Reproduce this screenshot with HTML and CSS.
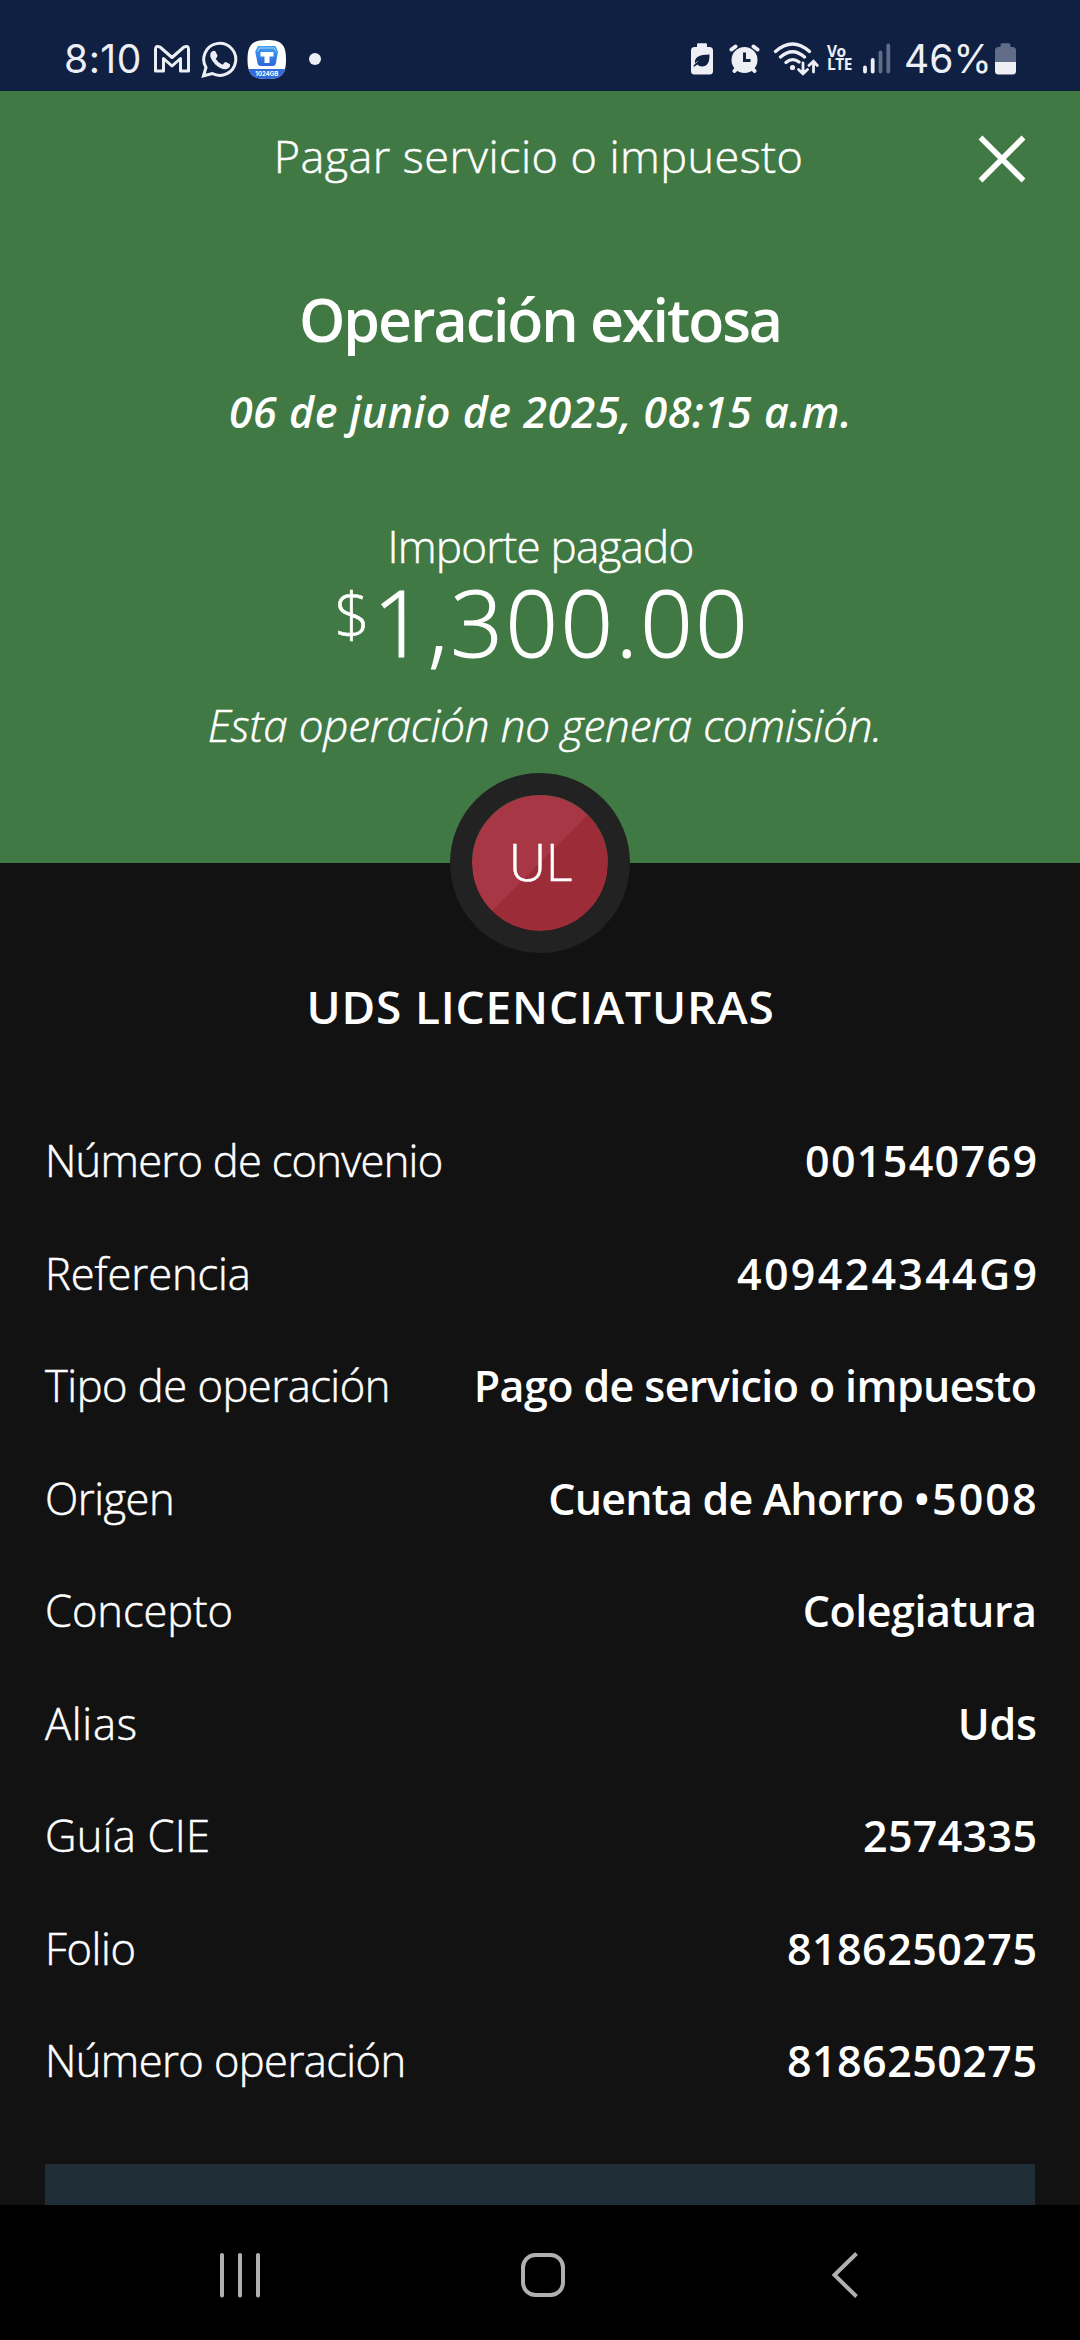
FILE: index.html
```html
<!DOCTYPE html>
<html lang="es">
<head>
<meta charset="utf-8">
<title>Pagar servicio o impuesto</title>
<link rel="stylesheet" href="styles.css">
</head>
<body>
<header class="status">
  <div class="status-side">
    <span class="clock">8:10</span>
    <svg class="ic gmail" width="38" height="40" viewBox="153 40 38 40"><path d="M155.500 49.500Q155.500 45 160 47L172 57.500L184 47Q188.500 45 188.500 49.500V71H180.500V58.500L172 66L163.500 58.500V71H155.500Z" fill="none" stroke="#edeff5" stroke-width="3" stroke-linejoin="round"/></svg>
    <svg class="ic whatsapp" width="38" height="40" viewBox="200 40 38 40"><path d="M203.500 75.800L206 67.500A16 16 0 1 1 212.300 73.500Z" fill="none" stroke="#edeff5" stroke-width="3" stroke-linejoin="miter"/><path d="M212.300 51.200Q214.200 50.200 215.500 51.500L217.500 55.500Q217.700 56.700 215.700 58.800Q218 63 222.500 64.800L224.500 62.500Q225.300 61.700 226.500 62.200L230 64.200Q230.700 67.700 226.800 69Q222 70.400 215.300 64.500Q209 57.800 210.500 53.300Q211 52 212.300 51.200Z" fill="#edeff5"/></svg>
    <svg class="ic app" width="40" height="40" viewBox="247 40 40 40">
      <defs><clipPath id="appShape"><path d="M267 40C281 40 286 44 286 59.500S281 79 267 79S247.500 75 247.500 59.500S253 40 267 40Z"/></clipPath><linearGradient id="box" x1="0" y1="0" x2="0" y2="1"><stop offset="0" stop-color="#3fa0ef"/><stop offset="1" stop-color="#2d66dd"/></linearGradient></defs>
      <g clip-path="url(#appShape)"><path fill="#fff" d="M247 40h40v40h-40z"/><path fill="#316bdc" d="M247 69h40v11h-40z"/></g>
      <path d="M258 46H275.500L278 51.500L276 63Q275.500 66 272.500 66H261Q258 66 257.500 63L255.200 51.500Z" fill="url(#box)"/>
      <path d="M257.500 51.500L259.300 48H274.200L276 51.500" fill="none" stroke="#d5ecff" stroke-width="0.700"/>
      <path d="M260.500 52H273.500V56.500H269.500V63H264.500V56.500H260.500Z" fill="#fff"/>
      <text class="app-size" x="266.800" y="76" text-anchor="middle">1024GB</text>
    </svg>
    <span class="dot"></span>
  </div>
  <div class="status-side">
    <svg class="ic" width="22" height="40" viewBox="691 40 22 40"><path d="M697 47V44.500Q697 43.300 698.300 43.300H705.700Q707 43.300 707 44.500V47H709.500Q713 47 713 50.500V71Q713 74.500 709.500 74.500H694.500Q691 74.500 691 71V50.500Q691 47 694.500 47Z" fill="#edeff5"/><path d="M709.500 54.500Q709.800 66.500 702 66.500Q698.500 66.300 697.500 64.500L693.700 67V65.300L699 60.500Q696.500 61.500 695 63.500Q693.500 54.500 709.500 54.500Z" fill="#0f2043"/></svg>
    <svg class="ic alarm" width="32" height="40" viewBox="729 40 32 40"><g fill="none" stroke="#edeff5" stroke-width="4" stroke-linecap="round"><path d="M731.500 49.500L735.500 46.500M757.500 49.500L753.500 46.500M734.500 71L738 67M754.500 71L751 67"/></g><circle cx="744.500" cy="60" r="13" fill="#edeff5"/><path d="M744.500 52.500V60.500H750.500" fill="none" stroke="#0f2043" stroke-width="3"/></svg>
    <svg class="ic wifi" width="46" height="40" viewBox="773 40 46 40"><g fill="none" stroke="#edeff5" stroke-width="3.300" stroke-linecap="round"><path d="M775.500 51.500Q792.500 36.500 809.500 51.500M780.500 57Q792.500 46.500 804.500 57M786 62.500Q792.500 57 799 62"/><path d="M803 63V73M798.500 69.500L803 73.800L807.500 69.500M813.500 72V62M809 65.500L813.500 61.200L817.300 65.500" stroke-width="2.800"/></g><circle cx="792.500" cy="67.500" r="2.600" fill="#edeff5"/></svg>
    <span class="volte"><span>Vo</span><span>LTE</span></span>
    <svg class="ic signal" width="28" height="40" viewBox="863 40 28 40"><g stroke-width="3.800" stroke-linecap="round"><path d="M865 67.500V71.500M872.700 60V71.500" stroke="#edeff5"/><path d="M880.500 52.500V71.500M888.300 45.500V71.500" stroke="#616c88"/></g></svg>
    <span class="percent">46%</span>
    <svg class="ic battery" width="21" height="40" viewBox="995 40 21 40"><path d="M1000.500 47V45Q1000.500 43.300 1002 43.300H1009Q1010.500 43.300 1010.500 45V47H1012.500Q1016 47 1016 50.500V63H995V50.500Q995 47 998.500 47Z" fill="#616c88"/><path d="M995 62H1016V71Q1016 74.500 1012.500 74.500H998.500Q995 74.500 995 71Z" fill="#edeff5"/></svg>
  </div>
</header>

<section class="hero">
  <div class="title-bar">
    <h1 class="title">Pagar servicio o impuesto</h1>
    <svg class="close" width="48" height="48" viewBox="0 0 48 48"><path d="M2.500 2.500L45.500 45.500M45.500 2.500L2.500 45.500" stroke="#fff" stroke-width="5.500" fill="none"/></svg>
  </div>
  <h2 class="result">Operación exitosa</h2>
  <p class="date">06 de junio de 2025, 08:15 a.m.</p>
  <p class="caption">Importe pagado</p>
  <p class="amount"><span class="currency">$</span><span class="figure">1,300.00</span></p>
  <p class="note">Esta operación no genera comisión.</p>
  <div class="avatar"><span class="initials">UL</span></div>
</section>

<main class="details">
  <h3 class="payee">UDS LICENCIATURAS</h3>
  <dl class="rows">
    <div class="row"><dt>Número de convenio</dt><dd>001540769</dd></div>
    <div class="row"><dt>Referencia</dt><dd>409424344G9</dd></div>
    <div class="row"><dt>Tipo de operación</dt><dd>Pago de servicio o impuesto</dd></div>
    <div class="row"><dt>Origen</dt><dd>Cuenta de Ahorro <span class="account">•5008</span></dd></div>
    <div class="row"><dt>Concepto</dt><dd>Colegiatura</dd></div>
    <div class="row"><dt>Alias</dt><dd>Uds</dd></div>
    <div class="row"><dt>Guía CIE</dt><dd>2574335</dd></div>
    <div class="row"><dt>Folio</dt><dd>8186250275</dd></div>
    <div class="row"><dt>Número operación</dt><dd>8186250275</dd></div>
  </dl>
  <div class="action"></div>
</main>

<nav class="nav">
  <svg width="44" height="50" viewBox="218 2250 44 50"><path d="M222 2255V2295.500M240 2255V2295.500M258 2255V2295.500" stroke="#b0b0b0" stroke-width="4" stroke-linecap="round"/></svg>
  <svg class="home" width="48" height="50" viewBox="518 2250 48 50"><rect x="522" y="2255" width="40" height="40" rx="12.500" fill="none" stroke="#b0b0b0" stroke-width="4"/></svg>
  <svg width="30" height="50" viewBox="830 2250 30 50"><path d="M856.500 2253.500L834.500 2275L856.500 2296.500" fill="none" stroke="#b0b0b0" stroke-width="4"/></svg>
</nav>
</body>
</html>
```
FILE: styles.css
```css
* { box-sizing: border-box; }
body {
  margin: 0;
  width: 1080px;
  height: 2340px;
  display: flex;
  flex-direction: column;
  overflow: hidden;
  background: #121212;
  color: #fff;
  font-family: "Open Sans", "Noto Sans", sans-serif;
}
h1, h2, h3, p, dl, dt, dd { margin: 0; }
svg { display: block; flex: none; }

/* Status bar */
.status {
  height: 91px;
  flex: none;
  display: flex;
  justify-content: space-between;
  align-items: flex-start;
  padding: 40px 64px 0 64px;
  background: #0f2043;
  color: #edeff5;
  font-family: Inter, Roboto, sans-serif;
}
.status-side { display: flex; align-items: flex-start; height: 40px; }
.clock, .percent { font-size: 39px; line-height: 38px; font-weight: 400; }
.clock { width: 89px; letter-spacing: 0.5px; }
.whatsapp { margin-left: 9px; }
.app { margin-left: 9px; }
.app-size { font: 700 6px Inter, sans-serif; fill: #fff; }
.dot { width: 12px; height: 12px; margin: 13px 0 0 22px; border-radius: 50%; background: #edeff5; }
.alarm { margin-left: 16px; }
.wifi { margin-left: 12px; }
.volte {
  display: flex;
  flex-direction: column;
  width: 36px;
  margin-left: 8px;
  padding-top: 5px;
  font: 700 15.500px/13px "Open Sans", sans-serif;
  letter-spacing: -0.5px;
}
.signal { margin-left: 0; }
.percent { width: 90px; margin-left: 13px; }
.battery { margin-left: 1px; }

/* Result header */
.hero {
  position: relative;
  height: 772px;
  flex: none;
  display: flex;
  flex-direction: column;
  align-items: center;
  padding-top: 35px;
  background: #407943;
  white-space: nowrap;
}
.title-bar {
  width: 1080px;
  display: grid;
  grid-template-columns: 100px 1fr 100px;
  align-items: start;
}
.title {
  grid-column: 2;
  padding-right: 3px;
  text-align: center;
  font-size: 45px;
  line-height: 60px;
  font-weight: 300;
  letter-spacing: 0.44px;
}
.title, .caption, .note, dt, .initials { -webkit-text-stroke: 0.5px #fff; }
.close { margin-top: 9px; margin-left: -2px; }
.result { margin-top: 93px; font-size: 59px; line-height: 80px; font-weight: 600; letter-spacing: -2.03px; }
.date { margin-top: 23px; padding-left: 1px; font-size: 43px; line-height: 60px; font-weight: 600; font-style: italic; letter-spacing: 0.49px; }
.caption { margin-top: 74px; padding-left: 1px; font-size: 44px; line-height: 60px; font-weight: 300; letter-spacing: -0.79px; }
.amount { display: flex; align-items: flex-start; height: 92px; padding-left: 5px; font-weight: 300; }
.currency { font-size: 62px; line-height: 76px; -webkit-text-stroke: 0.6px #fff; }
.figure { margin-left: 3px; font-size: 92px; line-height: 92px; letter-spacing: 2.600px; -webkit-text-stroke: 1.200px #fff; }
.note { margin-top: 27px; padding-left: 10px; font-size: 44px; line-height: 60px; font-weight: 300; font-style: italic; letter-spacing: -0.18px; }
.avatar {
  position: absolute;
  left: 450px;
  bottom: -90px;
  width: 180px;
  height: 180px;
  border: 22.500px solid #222;
  border-radius: 50%;
  display: flex;
  align-items: center;
  justify-content: center;
  background: linear-gradient(135deg, #a83746 50%, #9b2c38 50%) padding-box;
}
.initials { padding: 0 0 5px 1px; font-size: 52px; line-height: 60px; font-weight: 300; letter-spacing: -0.4px; }

/* Operation details */
.details { height: 1342px; flex: none; padding: 113px 45px 0; }
.payee { padding-left: 1px; text-align: center; font-size: 46px; line-height: 60px; font-weight: 600; letter-spacing: 0.84px; }
.rows { margin-top: 69px; }
.row {
  height: 112.500px;
  display: flex;
  align-items: center;
  justify-content: space-between;
  white-space: nowrap;
  --label-gap: 0px;
  --value-gap: 0px;
}
dt { font-size: 43.500px; line-height: 60px; font-weight: 300; letter-spacing: var(--label-gap); }
dd {
  margin-right: calc(-2px - var(--value-gap));
  font-size: 43px;
  line-height: 60px;
  font-weight: 600;
  letter-spacing: var(--value-gap);
}
.row:nth-child(1) { --label-gap: -0.75px; --value-gap: 1.34px; }
.row:nth-child(2) { --label-gap: -0.1px; --value-gap: 2.29px; }
.row:nth-child(3) { --label-gap: -0.5px; --value-gap: -0.6px; }
.row:nth-child(4) { --label-gap: -0.5px; --value-gap: -0.8px; }
.row:nth-child(5) { --label-gap: -0.1px; --value-gap: -0.45px; }
.row:nth-child(6) { --label-gap: 0.7px; --value-gap: -0.15px; }
.row:nth-child(7) { --label-gap: 0.25px; --value-gap: 0.31px; }
.row:nth-child(8) { --label-gap: -0.4px; --value-gap: 0.46px; }
.row:nth-child(9) { --label-gap: -0.6px; --value-gap: 0.46px; }
.account { margin-right: -2.500px; letter-spacing: 2.100px; }
.action { height: 41px; margin-top: 46.500px; background: #1f2d37; }

/* System navigation */
.nav {
  height: 135px;
  flex: none;
  display: flex;
  justify-content: space-between;
  padding: 45px 220px 0 218px;
  background: #000;
}
.home { margin-left: -7px; }
```
